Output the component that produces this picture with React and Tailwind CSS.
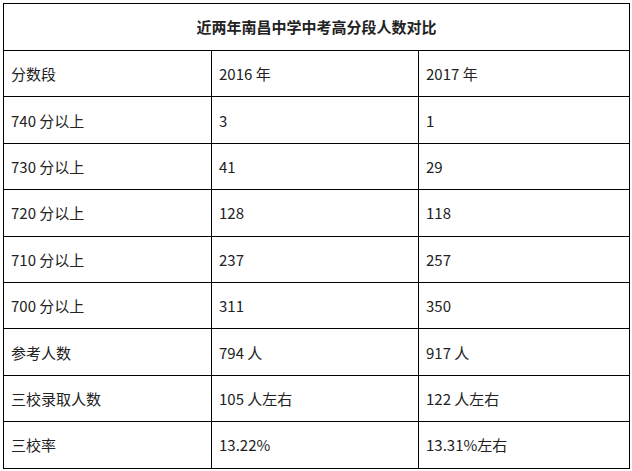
const rows = [
  ["分数段", "2016 年", "2017 年"],
  ["740 分以上", "3", "1"],
  ["730 分以上", "41", "29"],
  ["720 分以上", "128", "118"],
  ["710 分以上", "237", "257"],
  ["700 分以上", "311", "350"],
  ["参考人数", "794 人", "917 人"],
  ["三校录取人数", "105 人左右", "122 人左右"],
  ["三校率", "13.22%", "13.31%左右"],
];

export default function App() {
  return (
    <div className="h-[471px] w-[632px] bg-white pl-[3px] pt-[3px] font-['Microsoft_YaHei','Noto_Sans_CJK_SC',sans-serif] text-[15px] text-[#222]">
      <table className="w-[626px] table-fixed border-collapse">
        <colgroup>
          <col className="w-[208px]" />
          <col className="w-[207px]" />
          <col className="w-[211px]" />
        </colgroup>
        <tbody>
          <tr className="h-[47px]">
            <td colSpan={3} className="border border-black text-center font-bold">
              近两年南昌中学中考高分段人数对比
            </td>
          </tr>
          {rows.map((row) => (
            <tr key={row[0]} className="h-[46.4px]">
              {row.map((cell, i) => (
                <td key={i} className="border border-black pl-[7px] align-middle leading-none">
                  {cell}
                </td>
              ))}
            </tr>
          ))}
        </tbody>
      </table>
    </div>
  );
}
